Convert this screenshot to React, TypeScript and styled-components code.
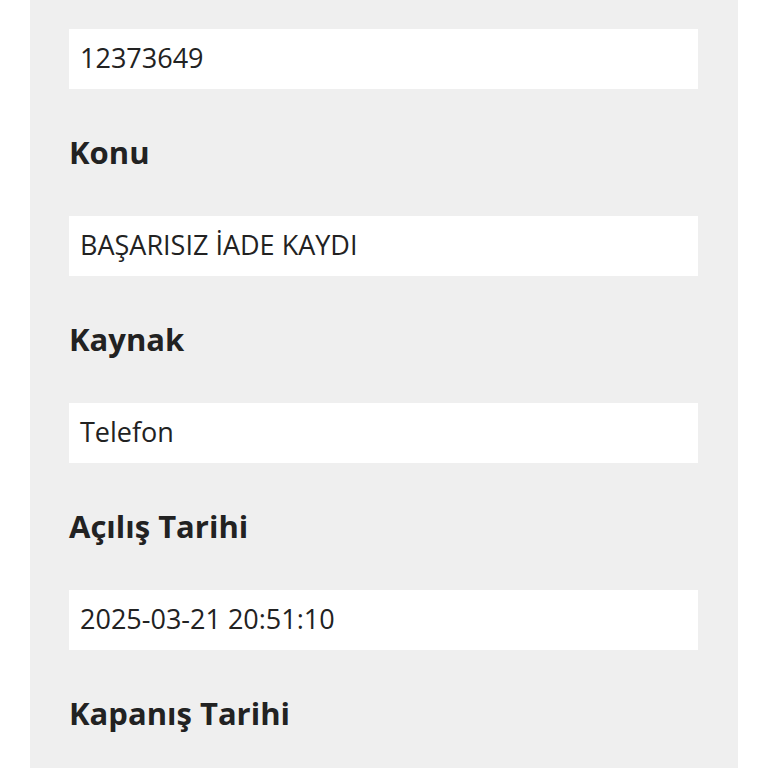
import styled, { createGlobalStyle } from "styled-components";

const GlobalStyle = createGlobalStyle`
  html, body {
    margin: 0;
    padding: 0;
    background: #ffffff;
    font-family: "Open Sans", "Noto Sans", sans-serif;
  }
`;

const fields = [
  { label: "", value: "12373649" },
  { label: "Konu", value: "BAŞARISIZ İADE KAYDI" },
  { label: "Kaynak", value: "Telefon" },
  { label: "Açılış Tarihi", value: "2025-03-21 20:51:10" },
  { label: "Kapanış Tarihi", value: "" },
];

export default function App() {
  return (
    <>
      <GlobalStyle />
      <StyledPanel>
        {fields.map((f, i) => (
          <StyledField key={i}>
            {f.label && <StyledLabel>{f.label}</StyledLabel>}
            {f.value && <StyledValue>{f.value}</StyledValue>}
          </StyledField>
        ))}
      </StyledPanel>
    </>
  );
}

const StyledPanel = styled.div`
  margin: 0 30px;
  background: #efefef;
  padding: 29px 40px 40px 39px;
  min-height: 768px;
  box-sizing: border-box;
`;

const StyledField = styled.div`
  display: flex;
  flex-direction: column;
`;

const StyledLabel = styled.div`
  margin: 44px 0 45px;
  line-height: 38px;
  font-size: 31px;
  font-weight: 700;
  color: #222222;
`;

const StyledValue = styled.div`
  height: 60px;
  box-sizing: border-box;
  display: flex;
  align-items: center;
  padding: 0 11px 3px;
  background: #ffffff;
  font-size: 27px;
  color: #222222;
`;
